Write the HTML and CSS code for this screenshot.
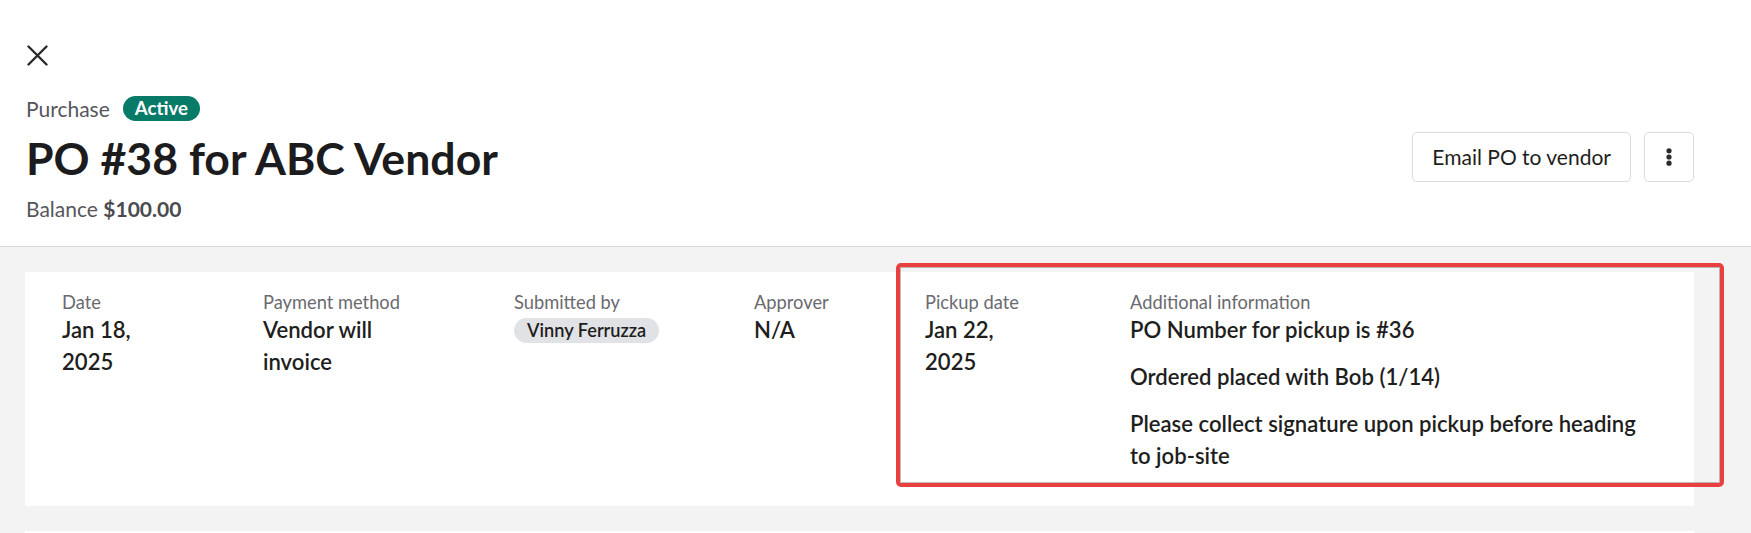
FILE: index.html
```html
<!DOCTYPE html>
<html lang="en">
<head>
<meta charset="utf-8">
<title>PO #38 for ABC Vendor</title>
<link rel="stylesheet" href="styles.css">
</head>
<body>
<header class="header">
  <button class="close" aria-label="Close">
    <svg width="21" height="21" viewBox="0 0 21 21"><path d="M1.5 1.5 L19.5 19.5 M19.5 1.5 L1.5 19.5" stroke="#2b2b2e" stroke-width="2.4" stroke-linecap="round" fill="none"/></svg>
  </button>
  <div class="head-row">
    <div class="head-main">
      <div class="kind-row">
        <span class="kind">Purchase</span>
        <span class="badge">Active</span>
      </div>
      <h1 class="title">PO #38 for ABC Vendor</h1>
      <div class="balance">Balance <strong>$100.00</strong></div>
    </div>
    <div class="actions">
      <button class="btn">Email PO to vendor</button>
      <button class="btn btn-icon" aria-label="More">
        <svg width="6" height="18" viewBox="0 0 6 18"><circle cx="3" cy="2.8" r="2.6" fill="#2b2b2e"/><circle cx="3" cy="9" r="2.6" fill="#2b2b2e"/><circle cx="3" cy="15.2" r="2.6" fill="#2b2b2e"/></svg>
      </button>
    </div>
  </div>
</header>
<main class="content">
  <section class="card">
    <div class="fields">
      <div class="field">
        <div class="label">Date</div>
        <div class="value v-date">Jan 18, 2025</div>
      </div>
      <div class="field">
        <div class="label">Payment method</div>
        <div class="value v-pay">Vendor will invoice</div>
      </div>
      <div class="field">
        <div class="label">Submitted by</div>
        <div class="value"><span class="pill">Vinny Ferruzza</span></div>
      </div>
      <div class="field">
        <div class="label">Approver</div>
        <div class="value">N/A</div>
      </div>
      <div class="field">
        <div class="label">Pickup date</div>
        <div class="value v-date">Jan 22, 2025</div>
      </div>
      <div class="field">
        <div class="label">Additional information</div>
        <div class="value v-info">
          <p>PO Number for pickup is #36</p>
          <p>Ordered placed with Bob (1/14)</p>
          <p>Please collect signature upon pickup before heading to job-site</p>
        </div>
      </div>
    </div>
    <div class="highlight"></div>
  </section>
  <section class="card card-next"></section>
</main>
</body>
</html>
```
FILE: styles.css
```css
* { box-sizing: border-box; }
html, body { margin: 0; padding: 0; }
body {
  font-family: "Lato", "Liberation Sans", sans-serif;
  color: #1e1e20;
  background: #f3f3f3;
  overflow: hidden;
  height: 533px;
}
button { font-family: inherit; cursor: pointer; }

.header {
  background: #fff;
  border-bottom: 1px solid #dcdcde;
  padding: 45px 57px 25px 26px;
}
.close {
  display: block;
  border: 0;
  background: none;
  padding: 0;
  margin: 0 0 30px 1px;
  width: 21px;
  height: 21px;
}
.close svg { display: block; }

.head-row {
  display: flex;
  align-items: center;
  justify-content: space-between;
}
.kind-row {
  display: flex;
  align-items: center;
  height: 25px;
}
.kind {
  font-size: 21px;
  line-height: 25px;
  color: #56565b;
}
.badge {
  margin-left: 13px;
  height: 25px;
  padding: 0 12px;
  border-radius: 13px;
  background: #087a68;
  color: #fff;
  font-weight: 700;
  font-size: 18.6px;
  line-height: 25px;
}
.title {
  margin: 11px 0 0;
  font-size: 44.6px;
  line-height: 52px;
  font-weight: 700;
  color: #1c1c1e;
}
.balance {
  margin-top: 13px;
  font-size: 21px;
  line-height: 24px;
  color: #56565b;
}
.balance strong { font-weight: 700; color: #4a4a4f; }

.actions {
  display: flex;
  gap: 13px;
  margin-bottom: 4px;
}
.btn {
  height: 50px;
  padding: 0 19px;
  border: 1px solid #dcdcdf;
  border-radius: 5px;
  background: #fff;
  color: #1e1e20;
  font-size: 21px;
}
.btn-icon {
  width: 50px;
  padding: 0;
  display: flex;
  align-items: center;
  justify-content: center;
}
.btn-icon svg { display: block; }

.content {
  padding: 25px 57px 0 25px;
  display: flex;
  flex-direction: column;
  gap: 25px;
}
.card {
  position: relative;
  background: #fff;
  padding: 18px 37px 34px;
}
.card-next { height: 2px; padding: 0; }

.fields {
  display: grid;
  grid-template-columns: 201px 251px 240px 171px 205px 1fr;
}
.label {
  font-size: 18.3px;
  line-height: 24px;
  color: #6a6a6f;
}
.value {
  font-size: 22.1px;
  line-height: 32px;
  font-weight: 600;
  color: #1e1e20;
}
.v-date { max-width: 90px; }
.v-pay { max-width: 150px; }
.v-info { max-width: 524px; }
.v-info p { margin: 0 0 15px; }
.v-info p:last-child { margin-bottom: 0; }

.pill {
  display: inline-block;
  vertical-align: middle;
  height: 25px;
  padding: 0 13px;
  border-radius: 13px;
  background: #e1e2e6;
  font-size: 18.2px;
  line-height: 25px;
  font-weight: 600;
  color: #1e1e20;
  position: relative;
  top: -2px;
}

.highlight {
  position: absolute;
  left: 871px;
  top: -9px;
  width: 828px;
  height: 224px;
  border: 4px solid #e8403f;
  border-radius: 5px;
  box-shadow: inset 0 0 0 1px rgba(90, 60, 60, 0.35);
  pointer-events: none;
}
```
